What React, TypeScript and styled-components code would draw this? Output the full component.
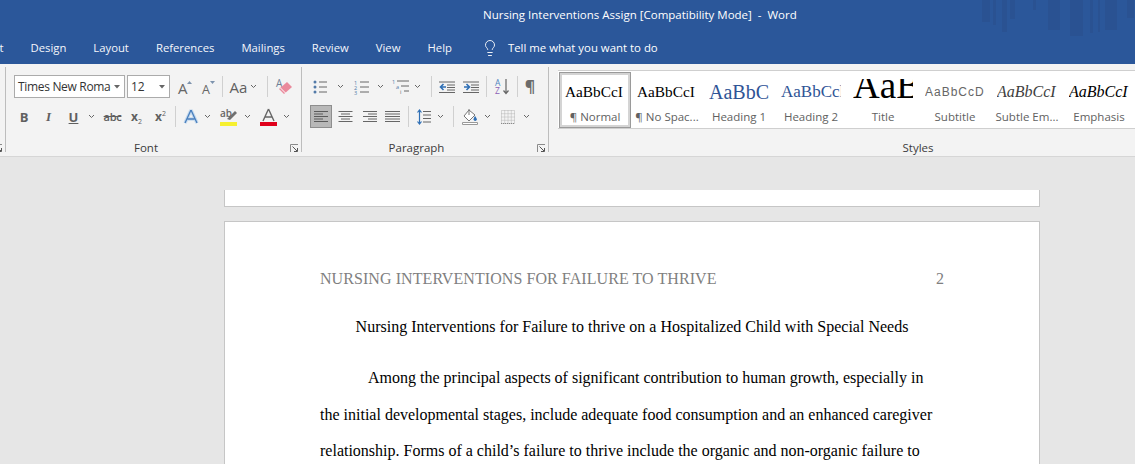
import React from "react";
import styled, { createGlobalStyle } from "styled-components";
import { Lightbulb } from "lucide-react";

const Global = createGlobalStyle`
  html, body { margin: 0; padding: 0; background: #e6e6e6; }
  body { width: 1135px; height: 464px; overflow: hidden; }
`;
const UI = `"Open Sans", "Noto Sans", sans-serif`;
const Serif = `"Liberation Serif", "Times New Roman", serif`;

const Shell = styled.div`
  width: 1135px; height: 464px; overflow: hidden; display: flex; flex-direction: column;
`;
const TitleBar = styled.header`
  position: relative; flex: none; height: 64px; background: #2b579a; color: #fff;
  font: 11.5px/16px ${UI}; overflow: hidden;
`;
const TitleRow = styled.div`
  height: 32px; padding: 7px 0 0 483px; box-sizing: border-box; white-space: pre;
`;
const TabRow = styled.nav`
  height: 32px; display: flex; align-items: center; margin-left: -27px; gap: 27px; font-size: 11.3px;
`;
const Tab = styled.span`
  white-space: nowrap; color: #f4f6fa;
`;
const TellMe = styled.span`
  display: flex; align-items: center; gap: 9px; margin-left: 2px; white-space: nowrap; font-size: 11.4px;
`;
const Skyline = styled.svg`
  position: absolute; right: 0; top: 0;
`;
const Ribbon = styled.section`
  flex: none; height: 93px; box-sizing: border-box; background: #f3f3f3; border-bottom: 1px solid #d6d6d6;
  display: flex; font: 11.5px/14px ${UI}; color: #444;
`;
const Stub = styled.div`
  position: relative; width: 5px; height: 85px; margin-top: 3px; border-right: 1px solid #bdbdbd; flex: none;
`;
const Group = styled.div<{ $w: number; $pl?: number; $last?: boolean }>`
  position: relative; flex: none; box-sizing: border-box; width: ${(p) => p.$w}px; height: 85px; margin-top: 3px;
  padding: 8px 0 0 ${(p) => p.$pl ?? 0}px;
  border-right: ${(p) => (p.$last ? "none" : "1px solid #bdbdbd")};
`;
const Row = styled.div<{ $mt?: number }>`
  display: flex; align-items: center; height: 23px; margin-top: ${(p) => p.$mt ?? 0}px;
`;
const GroupLabel = styled.div<{ $pl?: number; $pr?: number }>`
  position: absolute; left: 0; right: 0; top: 74px; text-align: center; color: #3c3c3c;
  padding: 0 ${(p) => p.$pr ?? 0}px 0 ${(p) => p.$pl ?? 0}px;
`;
const Launcher = styled.svg<{ $r: number }>`
  position: absolute; right: ${(p) => p.$r}px; top: 77px;
`;
const Combo = styled.div<{ $w: number; $ml?: number }>`
  width: ${(p) => p.$w}px; height: 23px; margin-left: ${(p) => p.$ml ?? 0}px; box-sizing: border-box;
  background: #fff; border: 1px solid #ababab; display: flex; align-items: center; justify-content: space-between;
  padding: 0 4px 0 3px; font: 12px/20px ${UI}; color: #333; white-space: nowrap; overflow: hidden;
`;
const ComboText = styled.span`
  letter-spacing: -0.32px;
`;
const Tool = styled.span<{ $w: number; $ml?: number }>`
  flex: none; display: flex; align-items: center; justify-content: center; height: 23px;
  width: ${(p) => p.$w}px; margin-left: ${(p) => p.$ml ?? 0}px; color: #5c5c5c;
  svg { overflow: visible; flex: none; }
`;
const ActiveTool = styled.span<{ $ml?: number }>`
  flex: none; display: flex; align-items: center; justify-content: center; box-sizing: border-box;
  width: 22px; height: 23px; margin-left: ${(p) => p.$ml ?? 0}px; background: #b8b8b8; border: 1px solid #8e8e8e;
`;
const Sep = styled.span<{ $ml: number }>`
  flex: none; width: 1px; height: 21px; margin-left: ${(p) => p.$ml}px; background: #d0d0d0;
`;
const FmtLetter = styled.span<{ $i?: boolean; $u?: boolean }>`
  font: ${(p) => (p.$i ? "italic " : "")}700 13px/16px ${(p) => (p.$i ? Serif : UI)}; color: #5f5f5f;
  text-decoration: ${(p) => (p.$u ? "underline" : "none")};
`;
const Strike = styled.span`
  font: 600 11px/14px ${UI}; color: #5f5f5f; text-decoration: line-through; letter-spacing: -0.3px;
`;
const Script = styled.span`
  font: 700 12px/14px ${UI}; color: #5f5f5f; white-space: nowrap;
  sub, sup { font-size: 7px; font-weight: 400; line-height: 0; }
`;
const CaseText = styled.span`
  font: 15px/18px ${UI}; color: #5f5f5f;
`;
const Pilcrow = styled.span`
  font: 700 16px/18px ${UI}; color: #6b6b6b; margin-top: -2px;
`;

const Gallery = styled.div`
  width: 577px; height: 59px; box-sizing: border-box; margin-top: -5px; padding-left: 1px; background: #fff;
  border-top: 1px solid #cfcfcf; border-bottom: 1px solid #cfcfcf; display: flex; overflow: hidden;
`;
const StyleItem = styled.div<{ $sel?: boolean }>`
  flex: none; width: 72px; height: 56px; margin-top: 1px; box-sizing: border-box; position: relative;
  display: flex; flex-direction: column; align-items: center;
  ${(p) => (p.$sel ? "outline: 1px solid #9a9a9a; outline-offset: -1px; border: 3px solid #d4d4d4;" : "border: 3px solid transparent;")}
`;
const Preview = styled.div<{ $size: number; $lh: number; $c?: string; $i?: boolean; $sp?: number; $f?: string }>`
  width: 60px; height: 23px; margin-top: 4px; overflow: hidden; white-space: nowrap;
  font: ${(p) => (p.$i ? "italic " : "")}${(p) => p.$size}px/${(p) => p.$lh}px ${(p) => p.$f ?? Serif};
  color: ${(p) => p.$c ?? "#000"}; letter-spacing: ${(p) => p.$sp ?? 0}px;
`;
const StyleName = styled.div`
  font: 11.5px/16px ${UI}; color: #616161; white-space: nowrap; margin-top: 7px;
`;

const Doc = styled.main`
  flex: 1; background: #e6e6e6; padding: 33px 0 0 224px; overflow: hidden; font-family: ${Serif};
`;
const SheetEnd = styled.div`
  width: 816px; height: 17px; box-sizing: border-box; background: #fff;
  border: 1px solid #c6c6c6; border-top: none;
`;
const Sheet = styled.article`
  width: 816px; height: 400px; margin-top: 14px; box-sizing: border-box; background: #fff;
  border: 1px solid #c6c6c6; padding: 47px 95px 0;
`;
const RunningHead = styled.div`
  display: flex; justify-content: space-between; font-size: 16px; line-height: 20px; color: #7f7f7f; white-space: nowrap;
`;
const HeadText = styled.span`
  letter-spacing: 0.07px;
`;
const DocTitle = styled.h1`
  margin: 28px 0 0; font: 400 16px/20px ${Serif}; color: #000; text-align: center; white-space: nowrap;
`;
const Body = styled.p`
  margin: 23px 0 0; font-size: 16px; line-height: 36.5px; color: #000; white-space: nowrap; text-indent: 48px;
`;

const Chev = ({ ml = 0 }: { ml?: number }) => (
  <Tool $w={7} $ml={ml}>
    <svg width="7" height="5" viewBox="0 0 7 5"><path d="M1 1l2.5 2.5L6 1" fill="none" stroke="#666" strokeWidth="1" /></svg>
  </Tool>
);
const DropArrow = () => (
  <svg width="6" height="4" viewBox="0 0 6 4"><path d="M0 0h6L3 3.500z" fill="#666" /></svg>
);
const Corner = ({ r }: { r: number }) => (
  <Launcher $r={r} width="9" height="9" viewBox="0 0 9 9">
    <path d="M.5 8V.5H8" fill="none" stroke="#8a8a8a" />
    <path d="M2.5 2.5l4.5 4.5M7.5 4v3.5H4" fill="none" stroke="#555" />
  </Launcher>
);
const lines = (x: number, ys: number[], w: number, c = "#666") =>
  ys.map((y, i) => <path key={i} d={`M${x} ${y + 0.5}h${w}`} stroke={c} />);

const AlignIcon = ({ kind, c = "#666" }: { kind: "l" | "c" | "r" | "j"; c?: string }) => {
  const rows = [14, 9, 14, 9, 14];
  return (
    <svg width="15" height="11" viewBox="0 0 15 11">
      {rows.map((w0, i) => {
        const w = kind === "j" ? 15 : w0;
        const x = kind === "l" || kind === "j" ? 0 : kind === "r" ? 15 - w : (15 - w) / 2;
        return <path key={i} d={`M${x} ${i * 2.5 + 0.5}h${w}`} stroke={c} />;
      })}
    </svg>
  );
};

const FontGroup = () => (
  <Group $w={296} $pl={8}>
    <Row>
      <Combo $w={111}><ComboText>Times New Roma</ComboText><DropArrow /></Combo>
      <Combo $w={43} $ml={2}><span>12</span><DropArrow /></Combo>
      <Tool $w={16} $ml={8}>
        <svg width="16" height="16" viewBox="0 0 16 16"><text x="0" y="15" fontFamily={UI} fontSize="15" fill="#666">A</text><path d="M9 5l2.5-3L14 5z" fill="#7d93ad" /></svg>
      </Tool>
      <Tool $w={14} $ml={8}>
        <svg width="14" height="16" viewBox="0 0 14 16"><text x="0" y="15" fontFamily={UI} fontSize="12.5" fill="#666">A</text><path d="M8 2h5l-2.500 3z" fill="#7d93ad" /></svg>
      </Tool>
      <Sep $ml={6} />
      <Tool $w={17} $ml={7}><CaseText>Aa</CaseText></Tool>
      <Chev ml={3} />
      <Sep $ml={10} />
      <Tool $w={16} $ml={8}>
        <svg width="16" height="18" viewBox="0 0 16 18">
          <text x="0" y="9" fontFamily={UI} fontSize="10" fill="#6e7f95">A</text>
          <path d="M3 11l8-7 5 5-8 7z" fill="#ea8a9c" />
          <path d="M4.500 10l5 5" stroke="#fff" />
        </svg>
      </Tool>
    </Row>
    <Row $mt={7}>
      <Tool $w={10} $ml={5}><FmtLetter>B</FmtLetter></Tool>
      <Tool $w={9} $ml={15}><FmtLetter $i>I</FmtLetter></Tool>
      <Tool $w={11} $ml={15}><FmtLetter $u>U</FmtLetter></Tool>
      <Chev ml={9} />
      <Tool $w={17} $ml={9}><Strike>abc</Strike></Tool>
      <Tool $w={13} $ml={9}><Script>x<sub>2</sub></Script></Tool>
      <Tool $w={13} $ml={11}><Script>x<sup>2</sup></Script></Tool>
      <Sep $ml={8} />
      <Tool $w={14} $ml={8}>
        <svg width="16" height="17" viewBox="0 0 16 17">
          <path d="M8 2L2 15M8 2l6 13M4.500 11h7" fill="none" stroke="#c5daee" strokeWidth="3.4" />
          <path d="M8 2L2 15M8 2l6 13M4.500 11h7" fill="none" stroke="#4a7fbd" strokeWidth="1.3" />
        </svg>
      </Tool>
      <Chev ml={6} />
      <Tool $w={18} $ml={9}>
        <svg width="18" height="18" viewBox="0 0 18 18">
          <text x="0" y="9" fontFamily={UI} fontSize="10" fontWeight="600" fill="#666">ab</text>
          <path d="M7 11l8-8 2 2-7 7z" fill="#707070" />
          <path d="M0 14h17v4H0z" fill="#f6f030" />
        </svg>
      </Tool>
      <Chev ml={6} />
      <Tool $w={17} $ml={9}>
        <svg width="17" height="18" viewBox="0 0 17 18">
          <path d="M8.500 1L3 13M8.500 1L14 13M5 9h7" fill="none" stroke="#666" strokeWidth="1.4" />
          <path d="M0 14h17v4H0z" fill="#e0001b" />
        </svg>
      </Tool>
      <Chev ml={6} />
    </Row>
    <GroupLabel $pr={15}>Font</GroupLabel>
    <Corner r={2} />
  </Group>
);

const ParagraphGroup = () => (
  <Group $w={247}>
    <Row>
      <Tool $w={14} $ml={11}>
        <svg width="14" height="14" viewBox="0 0 14 14">
          <circle cx="2" cy="2" r="1.5" fill="#527aa8" /><circle cx="2" cy="7" r="1.5" fill="#527aa8" /><circle cx="2" cy="12" r="1.5" fill="#527aa8" />
          {lines(6, [1.5, 6.5, 11.5], 8)}
        </svg>
      </Tool>
      <Chev ml={10} />
      <Tool $w={15} $ml={10}>
        <svg width="15" height="14" viewBox="0 0 15 14">
          <text x="0" y="5" fontFamily={UI} fontSize="5.5" fill="#527aa8">1</text>
          <text x="0" y="10" fontFamily={UI} fontSize="5.5" fill="#527aa8">2</text>
          <text x="0" y="14.5" fontFamily={UI} fontSize="5.5" fill="#527aa8">3</text>
          {lines(6, [1.5, 6.5, 11.5], 9)}
        </svg>
      </Tool>
      <Chev ml={8} />
      <Tool $w={17} $ml={8}>
        <svg width="17" height="15" viewBox="0 0 17 15">
          <text x="0" y="5" fontFamily={UI} fontSize="5.5" fill="#527aa8">1</text>
          <text x="4" y="10" fontFamily={UI} fontSize="5.5" fill="#527aa8">a</text>
          <text x="8" y="15" fontFamily={UI} fontSize="5.5" fill="#666">i</text>
          {lines(5, [1.5], 12)}{lines(9, [6.5], 8)}{lines(12, [11.5], 5)}
        </svg>
      </Tool>
      <Chev ml={5} />
      <Sep $ml={10} />
      <Tool $w={16} $ml={7}>
        <svg width="16" height="12" viewBox="0 0 16 12">
          {lines(0, [0.5, 11], 16)}{lines(8, [3.5, 6, 8.5], 8)}
          <path d="M7 6H2M4.500 3L1.500 6l3 3" fill="none" stroke="#2f6fb5" strokeWidth="1.6" />
        </svg>
      </Tool>
      <Tool $w={16} $ml={8}>
        <svg width="16" height="12" viewBox="0 0 16 12">
          {lines(0, [0.5, 11], 16)}{lines(8, [3.5, 6, 8.5], 8)}
          <path d="M1 6h5M3.500 3l3 3-3 3" fill="none" stroke="#2f6fb5" strokeWidth="1.6" />
        </svg>
      </Tool>
      <Sep $ml={7} />
      <Tool $w={14} $ml={8}>
        <svg width="15" height="17" viewBox="0 0 15 17">
          <text x="0" y="7.5" fontFamily={UI} fontSize="8.5" fill="#4f83c0">A</text>
          <text x="0" y="16" fontFamily={UI} fontSize="8.5" fill="#8c5fb5">Z</text>
          <path d="M11 1v14M8.500 12.500l2.500 3 2.500-3" fill="none" stroke="#666" strokeWidth="1.2" />
        </svg>
      </Tool>
      <Sep $ml={8} />
      <Tool $w={10} $ml={7}><Pilcrow>¶</Pilcrow></Tool>
    </Row>
    <Row $mt={7}>
      <ActiveTool $ml={8}><AlignIcon kind="l" c="#5a5a5a" /></ActiveTool>
      <Tool $w={15} $ml={6}><AlignIcon kind="c" /></Tool>
      <Tool $w={15} $ml={9}><AlignIcon kind="r" /></Tool>
      <Tool $w={15} $ml={8}><AlignIcon kind="j" /></Tool>
      <Sep $ml={8} />
      <Tool $w={14} $ml={8}>
        <svg width="14" height="16" viewBox="0 0 14 16">
          <path d="M2.500 1v14M.5 3.500l2-2.500 2 2.500M.5 12.500l2 2.500 2-2.500" fill="none" stroke="#2f6fb5" strokeWidth="1.2" />
          {lines(6, [2, 5.5, 9, 12.5], 8)}
        </svg>
      </Tool>
      <Chev ml={6} />
      <Sep $ml={9} />
      <Tool $w={16} $ml={8}>
        <svg width="16" height="17" viewBox="0 0 16 17">
          <path d="M7 2L2 8l5 5 6-6z" fill="#fff" stroke="#777" />
          <path d="M7 1v6" stroke="#777" />
          <path d="M13 8c1.200 1.600 1.800 2.500 1.800 3.300a1.600 1.600 0 0 1-3.200 0C11.600 10.500 12 9.600 13 8z" fill="#2f6fb5" />
          <path d="M.5 14.500h15v2H.5z" fill="#fff" stroke="#999" />
        </svg>
      </Tool>
      <Chev ml={6} />
      <Tool $w={14} $ml={10}>
        <svg width="14" height="14" viewBox="0 0 14 14">
          <path d="M.5.5h13v13H.5zM.5 7h13M7 .5v13M.5 3.700h13M.5 10.300h13M3.700.5v13M10.300.5v13" fill="none" stroke="#b4b4b4" strokeDasharray="1 1" />
          <path d="M0 13.500h14" stroke="#8a8a8a" strokeDasharray="1 1" />
        </svg>
      </Tool>
      <Chev ml={8} />
    </Row>
    <GroupLabel $pr={17}>Paragraph</GroupLabel>
    <Corner r={2} />
  </Group>
);

const stylesList = [
  { name: "¶ Normal", sample: "AaBbCcI", size: 15.3, lh: 26, sel: true },
  { name: "¶ No Spac...", sample: "AaBbCcI", size: 15.3, lh: 26 },
  { name: "Heading 1", sample: "AaBbC", size: 20, lh: 27, c: "#2f5496" },
  { name: "Heading 2", sample: "AaBbCcl", size: 17, lh: 26, c: "#2f5496" },
  { name: "Title", sample: "AaB", size: 37, lh: 13 },
  { name: "Subtitle", sample: "AaBbCcD", size: 12, lh: 26, c: "#666", sp: 1, f: `"Liberation Sans", sans-serif` },
  { name: "Subtle Em...", sample: "AaBbCcI", size: 16, lh: 26, c: "#404040", i: true },
  { name: "Emphasis", sample: "AaBbCcI", size: 16, lh: 26, i: true },
];

export default function App() {
  return (
    <Shell>
      <Global />
      <TitleBar>
        <Skyline width="155" height="40" viewBox="0 0 155 40" fill="#2a5292">
          <rect x="2" width="8" height="22" /><rect x="13" width="3" height="25" /><rect x="22" width="5" height="32" />
          <rect x="30" width="5" height="19" /><rect x="53" width="3" height="10" /><rect x="68" width="12" height="30" />
          <rect x="90" width="13" height="36" /><rect x="110" width="3" height="33" /><rect x="118" width="2" height="32" />
          <rect x="125" width="12" height="30" /><rect x="147" width="7" height="18" />
        </Skyline>
        <TitleRow>Nursing Interventions Assign [Compatibility Mode]  -  Word</TitleRow>
        <TabRow>
          <Tab>Insert</Tab><Tab>Design</Tab><Tab>Layout</Tab><Tab>References</Tab><Tab>Mailings</Tab>
          <Tab>Review</Tab><Tab>View</Tab><Tab>Help</Tab>
          <TellMe><Lightbulb size={18} strokeWidth={1.2} color="#fff" />Tell me what you want to do</TellMe>
        </TabRow>
      </TitleBar>
      <Ribbon>
        <Stub><Corner r={2} /></Stub>
        <FontGroup />
        <ParagraphGroup />
        <Group $w={586} $pl={9} $last>
          <Gallery>
            {stylesList.map((s) => (
              <StyleItem key={s.name} $sel={s.sel}>
                <Preview $size={s.size} $lh={s.lh} $c={s.c} $i={s.i} $sp={s.sp} $f={s.f}>{s.sample}</Preview>
                <StyleName>{s.name}</StyleName>
              </StyleItem>
            ))}
          </Gallery>
          <GroupLabel $pl={152}>Styles</GroupLabel>
        </Group>
      </Ribbon>
      <Doc>
        <SheetEnd />
        <Sheet>
          <RunningHead><HeadText>NURSING INTERVENTIONS FOR FAILURE TO THRIVE</HeadText><span>2</span></RunningHead>
          <DocTitle>Nursing Interventions for Failure to thrive on a Hospitalized Child with Special Needs</DocTitle>
          <Body>
            Among the principal aspects of significant contribution to human growth, especially in<br />
            the initial developmental stages, include adequate food consumption and an enhanced caregiver<br />
            relationship. Forms of a child’s failure to thrive include the organic and non-organic failure to
          </Body>
        </Sheet>
      </Doc>
    </Shell>
  );
}
